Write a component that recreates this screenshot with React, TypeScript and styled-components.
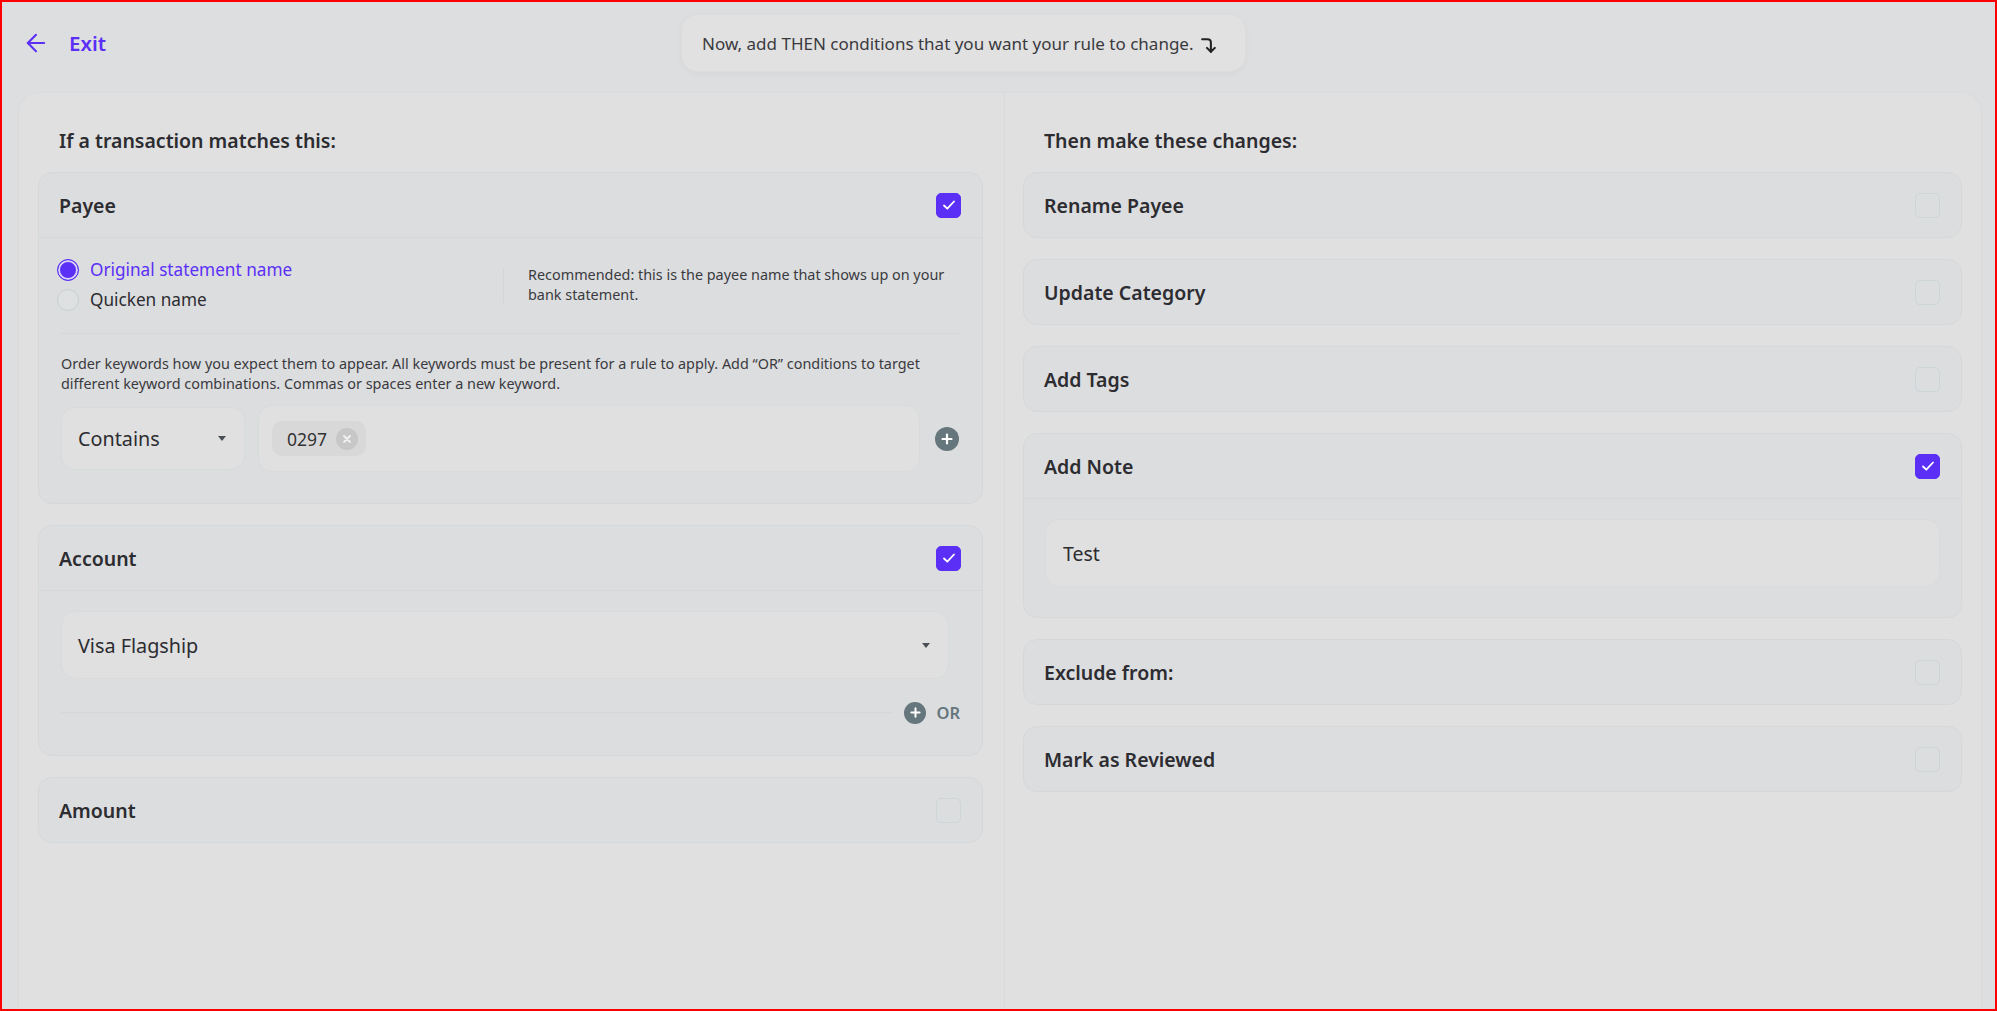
import React from "react";
import styled, { createGlobalStyle } from "styled-components";
import { ArrowLeft, CornerRightDown } from "lucide-react";

const PURPLE = "#5b2ff6";
const TEXT = "#2c2c31";

const GlobalStyle = createGlobalStyle`
  html, body { margin: 0; padding: 0; }
  body { font-family: "Noto Sans", Roboto, "Liberation Sans", sans-serif; color: ${TEXT}; }
  * { box-sizing: border-box; }
`;

const Frame = styled.div`
  width: 1997px;
  height: 1011px;
  border: 2px solid #ff0000;
  background: #dddee0;
  display: flex;
  flex-direction: column;
  overflow: hidden;
`;

const TopBar = styled.div`
  height: 90px;
  flex: none;
  display: flex;
  align-items: center;
  padding: 0 0 0 20px;
`;

const ExitLink = styled.a`
  display: flex;
  align-items: center;
  gap: 19px;
  color: ${PURPLE};
  font-size: 20.5px;
  font-weight: 600;
  text-decoration: none;
  margin-top: -8px;
`;

const Hint = styled.div`
  margin-left: 575px;
  margin-top: -8px;
  width: 565px;
  height: 58px;
  display: flex;
  align-items: center;
  gap: 5px;
  padding-left: 20px;
  border-radius: 16px;
  background: #e1e1e1;
  border: 1px solid #dcdcdc;
  box-shadow: 0 2px 6px rgba(0, 0, 0, 0.03);
  font-size: 17px;
  color: #3a3a3e;
`;

const Panel = styled.div`
  flex: 1;
  display: grid;
  grid-template-columns: 985px 1fr;
  margin: 0 13px 0 16px;
  background: #e0e0e0;
  border: 1px solid #d9dadb;
  border-bottom: none;
  border-radius: 20px 20px 0 0;
`;

const Column = styled.section<{ $right?: boolean }>`
  padding: ${(p) => (p.$right ? "36px 19px 0 18px" : "36px 21px 0 19px")};
  border-left: ${(p) => (p.$right ? "1px solid #d9d9d9" : "none")};
  display: flex;
  flex-direction: column;
`;

const ColumnTitle = styled.h2`
  margin: 0 0 19px;
  padding-left: 21px;
  font-size: 19.5px;
  line-height: 24px;
  font-weight: 600;
  color: ${TEXT};
`;

const Stack = styled.div`
  display: flex;
  flex-direction: column;
  gap: 21px;
`;

const Card = styled.div`
  background: #dcdddf;
  border: 1px solid #d5d8da;
  border-radius: 14px;
`;

const CardHeader = styled.div<{ $open?: boolean }>`
  height: ${(p) => (p.$open ? "65px" : "64px")};
  display: flex;
  align-items: center;
  justify-content: space-between;
  padding: 0 21px 0 20px;
  border-bottom: ${(p) => (p.$open ? "1px solid #d5d8da" : "none")};
`;

const CardTitle = styled.span`
  font-size: 19.5px;
  font-weight: 600;
  color: ${TEXT};
`;

const Box = styled.span<{ $checked?: boolean }>`
  width: 25px;
  height: 25px;
  border-radius: 5px;
  display: inline-flex;
  align-items: center;
  justify-content: center;
  background: ${(p) => (p.$checked ? PURPLE : "transparent")};
  border: 1px solid ${(p) => (p.$checked ? PURPLE : "#cdd5d8")};
`;

const CardBody = styled.div<{ $pad: string }>`
  padding: ${(p) => p.$pad};
`;

const RadioSection = styled.div`
  display: grid;
  grid-template-columns: 444px 1px 1fr;
  align-items: center;
  padding: 21px 0 22px;
  border-bottom: 1px solid #d5d8da;
`;

const RadioList = styled.div`
  display: flex;
  flex-direction: column;
  gap: 8px;
  margin-left: -2px;
`;

const RadioRow = styled.label<{ $checked?: boolean }>`
  display: flex;
  align-items: center;
  gap: 11px;
  font-size: 17.2px;
  line-height: 22px;
  color: ${(p) => (p.$checked ? PURPLE : TEXT)};
`;

const RadioDot = styled.span<{ $checked?: boolean }>`
  width: 22px;
  height: 22px;
  border-radius: 50%;
  border: ${(p) => (p.$checked ? `1.5px solid ${PURPLE}` : "1px solid #c8d0d3")};
  background: ${(p) => (p.$checked ? PURPLE : "#dfe0e1")};
  box-shadow: ${(p) => (p.$checked ? "inset 0 0 0 2px #d8d4f5" : "none")};
`;

const VDivider = styled.span`
  width: 1px;
  height: 35px;
  background: #d3d6d8;
`;

const Recommendation = styled.p`
  margin: 0;
  padding-left: 24px;
  font-size: 14.4px;
  line-height: 20px;
  color: #3a3a3e;
`;

const HelpText = styled.p`
  margin: 20px 0 11px 2px;
  font-size: 14.4px;
  line-height: 20px;
  color: #3a3a3e;
`;

const KeywordRow = styled.div`
  display: flex;
  align-items: center;
  gap: 13px;
  padding-right: 3px;
`;

const Field = styled.div<{ $height: number }>`
  height: ${(p) => p.$height}px;
  display: flex;
  align-items: center;
  background: #e0e0e0;
  border: 1px solid #d8dbdc;
  border-radius: 14px;
`;

const SelectField = styled(Field)<{ $width?: number }>`
  ${(p) => (p.$width ? `width: ${p.$width}px;` : "")}
  justify-content: space-between;
  padding: 0 18px 0 16px;
  font-size: 19.8px;
  color: ${TEXT};
`;

const ContainsSelect = styled(SelectField)`
  margin-left: 2px;
`;

const AccountSelect = styled(SelectField)`
  margin: 0 13px 0 2px;
`;

const KeywordInput = styled(Field)`
  flex: 1;
  padding-left: 13px;
  margin-right: 2px;
`;

const Chip = styled.span`
  height: 35px;
  display: inline-flex;
  align-items: center;
  gap: 9px;
  padding: 0 8px 0 15px;
  border-radius: 10px;
  background: #d8d8d9;
  font-size: 17.5px;
  color: #333;
`;

const ChipClose = styled.span`
  width: 22px;
  height: 22px;
  border-radius: 50%;
  background: #c7c7c8;
  display: inline-flex;
  align-items: center;
  justify-content: center;
`;

const Caret = styled.span`
  width: 0;
  height: 0;
  border-left: 4.5px solid transparent;
  border-right: 4.5px solid transparent;
  border-top: 5px solid #4a4f55;
`;

const PlusCircle = styled.span<{ $size: number }>`
  width: ${(p) => p.$size}px;
  height: ${(p) => p.$size}px;
  flex: none;
  border-radius: 50%;
  background: #66767d;
  display: inline-flex;
  align-items: center;
  justify-content: center;
`;

const OrRow = styled.div`
  display: flex;
  align-items: center;
  margin-top: 22px;
  padding-right: 2px;
`;

const OrLine = styled.span`
  flex: 1;
  height: 1px;
  background: #d5d8da;
  margin: 0 12px 0 2px;
`;

const OrLabel = styled.span`
  margin-left: 10px;
  font-size: 16.5px;
  font-weight: 600;
  color: #66767d;
`;

const NoteInput = styled(Field)`
  padding-left: 17px;
  font-size: 19.5px;
  color: ${TEXT};
`;

function Check({ checked }: { checked?: boolean }) {
  return (
    <Box $checked={checked}>
      {checked && (
        <svg width="16" height="16" viewBox="0 0 16 16" fill="none">
          <path d="M3 8.5l3.3 3.2L13 4.5" stroke="#fff" strokeWidth="1.8" strokeLinecap="round" strokeLinejoin="round" />
        </svg>
      )}
    </Box>
  );
}

function Plus({ size }: { size: number }) {
  const s = size * 0.5;
  return (
    <PlusCircle $size={size}>
      <svg width={s} height={s} viewBox="0 0 12 12">
        <path d="M6 1.5v9M1.5 6h9" stroke="#fff" strokeWidth="2.2" strokeLinecap="round" />
      </svg>
    </PlusCircle>
  );
}

function SimpleCard({ title, checked }: { title: string; checked?: boolean }) {
  return (
    <Card>
      <CardHeader>
        <CardTitle>{title}</CardTitle>
        <Check checked={checked} />
      </CardHeader>
    </Card>
  );
}

export default function App() {
  return (
    <>
      <GlobalStyle />
      <Frame>
        <TopBar>
          <ExitLink>
            <ArrowLeft size={28} strokeWidth={1.8} />
            Exit
          </ExitLink>
          <Hint>
            Now, add THEN conditions that you want your rule to change.
            <CornerRightDown size={19} strokeWidth={2.6} color="#222" style={{ marginTop: 5 }} />
          </Hint>
        </TopBar>
        <Panel>
          <Column>
            <ColumnTitle>If a transaction matches this:</ColumnTitle>
            <Stack>
              <Card>
                <CardHeader $open>
                  <CardTitle>Payee</CardTitle>
                  <Check checked />
                </CardHeader>
                <CardBody $pad="0 20px 31px">
                  <RadioSection>
                    <RadioList>
                      <RadioRow $checked>
                        <RadioDot $checked />
                        Original statement name
                      </RadioRow>
                      <RadioRow>
                        <RadioDot />
                        Quicken name
                      </RadioRow>
                    </RadioList>
                    <VDivider />
                    <Recommendation>
                      Recommended: this is the payee name that shows up on your bank statement.
                    </Recommendation>
                  </RadioSection>
                  <HelpText>
                    Order keywords how you expect them to appear. All keywords must be present for a rule to apply. Add “OR” conditions to target different keyword combinations. Commas or spaces enter a new keyword.
                  </HelpText>
                  <KeywordRow>
                    <ContainsSelect $height={63} $width={184}>
                      Contains
                      <Caret />
                    </ContainsSelect>
                    <KeywordInput $height={67}>
                      <Chip>
                        0297
                        <ChipClose>
                          <svg width="10" height="10" viewBox="0 0 10 10">
                            <path d="M2 2l6 6M8 2l-6 6" stroke="#f2f2f2" strokeWidth="1.8" strokeLinecap="round" />
                          </svg>
                        </ChipClose>
                      </Chip>
                    </KeywordInput>
                    <Plus size={24} />
                  </KeywordRow>
                </CardBody>
              </Card>

              <Card>
                <CardHeader $open>
                  <CardTitle>Account</CardTitle>
                  <Check checked />
                </CardHeader>
                <CardBody $pad="20px 20px 31px">
                  <AccountSelect $height={68}>
                    Visa Flagship
                    <Caret />
                  </AccountSelect>
                  <OrRow>
                    <OrLine />
                    <Plus size={22} />
                    <OrLabel>OR</OrLabel>
                  </OrRow>
                </CardBody>
              </Card>

              <SimpleCard title="Amount" />
            </Stack>
          </Column>

          <Column $right>
            <ColumnTitle>Then make these changes:</ColumnTitle>
            <Stack>
              <SimpleCard title="Rename Payee" />
              <SimpleCard title="Update Category" />
              <SimpleCard title="Add Tags" />
              <Card>
                <CardHeader $open>
                  <CardTitle>Add Note</CardTitle>
                  <Check checked />
                </CardHeader>
                <CardBody $pad="20px 21px 30px">
                  <NoteInput $height={68}>Test</NoteInput>
                </CardBody>
              </Card>
              <SimpleCard title="Exclude from:" />
              <SimpleCard title="Mark as Reviewed" />
            </Stack>
          </Column>
        </Panel>
      </Frame>
    </>
  );
}
